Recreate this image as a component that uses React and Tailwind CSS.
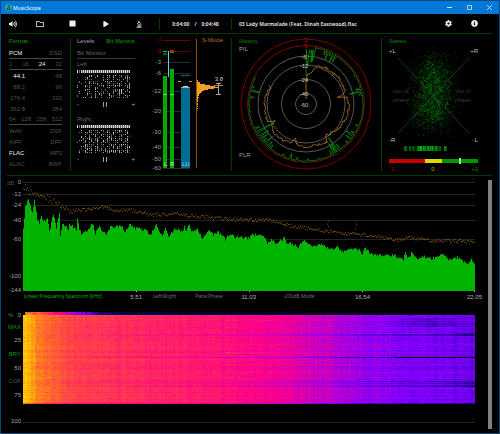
import React from 'react'
import { FaVolumeUp, FaRegFolder, FaStop, FaPlay, FaMicroscope, FaCog, FaInfoCircle } from 'react-icons/fa'

// small seeded generator so the charts are stable between renders
function makeRandom(seed) {
  let s = seed
  return () => {
    s = (s + 0x6d2b79f5) | 0
    let t = Math.imul(s ^ (s >>> 15), 1 | s)
    t = (t + Math.imul(t ^ (t >>> 7), 61 | t)) ^ t
    return ((t ^ (t >>> 14)) >>> 0) / 4294967296
  }
}

function interpolate(points, x) {
  if (x <= points[0][0]) return points[0][1]
  for (let i = 1; i < points.length; i++) {
    const [x1, y1] = points[i]
    const [x0, y0] = points[i - 1]
    if (x <= x1) return y0 + ((y1 - y0) * (x - x0)) / (x1 - x0)
  }
  return points[points.length - 1][1]
}

/* ---------- title bar and toolbar ---------- */

function TitleBar() {
  return (
    <header className="flex h-[13px] items-center bg-[#0078d7] pl-1 text-white">
      <svg className="h-[7px] w-[7px]" viewBox="0 0 14 14" aria-hidden="true">
        <circle cx="7" cy="7" r="7" fill="#2fa79a" />
        <path d="M6 2l3 1-1 4 2 4M7 6l-3 5M3 11h8" stroke="#0c3f3a" strokeWidth="1.6" fill="none" />
      </svg>
      <h1 className="ml-[1px] font-['Noto_Sans',sans-serif] text-[5px] leading-[8px]">MusicScope</h1>
      <div className="ml-auto flex">
        <button aria-label="Minimize" className="flex h-[13px] w-[20px] items-center justify-center">
          <svg className="h-[5px] w-[5px]" viewBox="0 0 5 5"><path d="M0 2.5h5" stroke="#cfe6fa" /></svg>
        </button>
        <button aria-label="Maximize" className="flex h-[13px] w-[20px] items-center justify-center">
          <svg className="h-[5px] w-[5px]" viewBox="0 0 5 5"><path d="M.5.5h4v4h-4z" stroke="#cfe6fa" strokeWidth=".8" fill="none" /></svg>
        </button>
        <button aria-label="Close" className="flex h-[13px] w-[20px] items-center justify-center">
          <svg className="h-[5px] w-[5px]" viewBox="0 0 5 5"><path d="M0 0l5 5M5 0l-5 5" stroke="#e6f2fc" strokeWidth=".8" /></svg>
        </button>
      </div>
    </header>
  )
}

function ToolButton({ label, className, children }) {
  return (
    <button aria-label={label} className={`flex h-[18px] items-center justify-center text-[#f0f0f0] ${className}`}>
      {children}
    </button>
  )
}

function MicroscopeIcon() {
  return (
    <svg className="h-[8px] w-[6px]" viewBox="0 0 12 16" fill="none" stroke="currentColor" strokeWidth="1.6">
      <path d="M6.5 1l-3 6M5 4l3 1.500M8 5.500c3 2 2.500 6-1 7.500M3 10h5M1 14.500h10M3 7l2 1" />
      <path d="M3 12.500h6" />
    </svg>
  )
}

function Toolbar() {
  return (
    <div className="ml-[6px] mr-[7px] flex h-[20px] items-center border-b border-[#003c00] text-[6px] font-bold text-[#dcdcdc]">
      <ToolButton label="Volume" className="mr-1 w-[12px]"><FaVolumeUp size={8} /></ToolButton>
      <ToolButton label="Open" className="w-[33px]"><FaRegFolder size={8} /></ToolButton>
      <ToolButton label="Stop" className="w-[33px]"><FaStop size={7} /></ToolButton>
      <ToolButton label="Play" className="w-[33px]"><FaPlay size={6} /></ToolButton>
      <ToolButton label="Analyze" className="w-[33px]"><MicroscopeIcon /></ToolButton>
      <div className="ml-1 h-[12px] w-px bg-[#003c00]" />
      <div className="flex w-[71px] items-center justify-center gap-[5px] whitespace-nowrap font-['Open_Sans',sans-serif] text-[5px]">
        <span>0:04:00</span>
        <span>/</span>
        <span>0:04:48</span>
      </div>
      <div className="h-[12px] w-px bg-[#003c00]" />
      <p className="ml-[7px] whitespace-nowrap font-['Open_Sans',sans-serif] text-[5px]">
        03 Lady Marmalade (Feat. Dinah Eastwood).flac
      </p>
      <div className="ml-auto mr-[5px] flex">
        <ToolButton label="Settings" className="w-[26px]"><FaCog size={7} /></ToolButton>
        <ToolButton label="Info" className="w-[26px]"><FaInfoCircle size={7} /></ToolButton>
      </div>
    </div>
  )
}

/* ---------- format panel ---------- */

const formatRows = [
  { items: ['PCM', 'DSD'], active: 'PCM', line: true },
  { items: ['1', '16', '24', '32'], active: '24', line: true },
  { items: ['44.1', '48'], active: '44.1', rates: true },
  { items: ['88.2', '96'], rates: true },
  { items: ['176.4', '192'], rates: true },
  { items: ['352.8', '384'], rates: true },
  { items: ['64', '128', '256', '512'], line: true },
  { items: ['WAV', 'DSF'] },
  { items: ['AIFF', 'DFF'] },
  { items: ['FLAC', 'MP3'], active: 'FLAC' },
  { items: ['ALAC', 'BWF'] },
]

function FormatPanel() {
  return (
    <section className="my-1 w-[64px] border-r border-[#003c00] pl-[2px] pr-2">
      <h2 className="h-[10px] leading-[6px] text-[#00a000]">Format</h2>
      {formatRows.map((row) => (
        <div
          key={row.items[0]}
          className={`flex h-[11px] items-center justify-between text-[#505050] ${row.line ? 'border-b border-[#484848]' : ''}`}
        >
          {row.items.map((item, i) => (
            <span
              key={item}
              className={`${item === row.active ? 'text-[#f0f0f0]' : ''} ${row.rates && i === 0 ? 'w-[16px] text-right' : ''}`}
            >
              {item}
            </span>
          ))}
        </div>
      ))}
    </section>
  )
}

/* ---------- levels panel ---------- */

function BitPattern({ seed }) {
  const random = makeRandom(seed)
  const marks = []
  for (let c = 0; c < 27; c++) {
    const density = c < 4 ? 0.35 : c % 3 === 2 ? 0.4 : 0.75
    for (let r = 0; r < 12; r++) {
      if (random() < density) {
        marks.push(<rect key={`${c}-${r}`} x={c * 2} y={5 + r * 2} width="1" height={random() < 0.6 ? 1 : 2} opacity={0.3 + random() * 0.6} />)
      }
    }
  }
  return (
    <svg className="block h-[28px] w-[54px]" viewBox="0 0 54 28" fill="#d8d8d8" shapeRendering="crispEdges">
      {Array.from({ length: 27 }, (_, c) => (
        <rect key={c} x={c * 2} y="0" width="1" height="3" opacity={c === 1 ? 0.5 : 1} />
      ))}
      <rect x="4" y="0" width="49" height="3" opacity="0.45" />
      {marks}
    </svg>
  )
}

function BitChannel({ name, seed }) {
  return (
    <div>
      <h3 className="h-[11px] leading-[11px] text-[#686868]">{name}</h3>
      <BitPattern seed={seed} />
      <div className="flex h-[12px] items-center justify-between text-[#b8b8b8]">
        <span>-</span>
        <span className="flex gap-[2px]">
          <i className="h-[5px] w-px bg-[#a0a0a0]" />
          <i className="h-[5px] w-px bg-[#a0a0a0]" />
        </span>
        <span>+</span>
      </div>
    </div>
  )
}

function LevelsPanel() {
  return (
    <section className="my-1 w-[69px] pl-[6px] pr-[5px]">
      <div className="flex h-[10px] items-start justify-between leading-[6px]">
        <button className="text-[#a8a8a8]">Levels</button>
        <button className="text-[#00a000]">Bit Monitor</button>
      </div>
      <h2 className="h-[11px] border-b border-[#383838] leading-[10px] text-[#686868]">Bit Monitor</h2>
      <div className="flex flex-col gap-1">
        <BitChannel name="Left" seed={3} />
        <BitChannel name="Right" seed={11} />
      </div>
    </section>
  )
}

/* ---------- level meter ---------- */

const meterScale = [
  ['3', 6, '#900000'], ['0', 17, '#c00000'], ['-3', 28, '#a0a0a0'], ['-6', 39, '#a0a0a0'], ['-12', 57, '#a0a0a0'],
  ['-20', 77, '#a0a0a0'], ['-30', 98, '#a0a0a0'], ['-40', 113, '#a0a0a0'], ['-50', 125, '#a0a0a0'], ['-60', 134, '#a0a0a0'],
]

const histogram = [1, 1, 3, 3, 8, 13, 18, 21, 17, 11, 7, 5, 4, 3, 2, 2, 1, 2, 1, 1, 1, 1, 0, 1, 1, 0, 1, 0, 1]

function MeterPanel() {
  return (
    <section className="my-1 w-[92px] border-r border-[#003c00]">
      <svg className="-my-1 block h-[141px] w-[91px]" viewBox="0 0 91 141" fontSize="6" shapeRendering="crispEdges">
        {meterScale.map(([label, y, color], i) => (
          <g key={label}>
            <text x="21" y={y + 2} textAnchor="end" fill={color}>{label}</text>
            <path d={`M23 ${y}.5h27`} stroke={i < 2 ? '#680000' : '#2c2c2c'} />
          </g>
        ))}
        <rect x="23" y="42" width="4" height="92" fill="#00aa00" />
        <rect x="30" y="35" width="4" height="99" fill="#00aa00" />
        <rect x="23" y="17" width="4" height="1" fill="#00c850" />
        <rect x="23" y="19" width="4" height="2" fill="#006400" />
        <rect x="30" y="16" width="4" height="2" fill="#c81414" />
        <rect x="30" y="18" width="4" height="1" fill="#00a000" />
        <rect x="23" y="60" width="4" height="1" fill="#30ff30" />
        <rect x="30" y="60" width="4" height="1" fill="#30ff30" />
        <rect x="28" y="17" width="1" height="26" fill="#58d0ff" />
        <rect x="41" y="53" width="9" height="81" fill="#006c96" />
        <rect x="41" y="41" width="9" height="1" fill="#006c96" />
        <rect x="41" y="53" width="9" height="1" fill="#b0a890" />
        <rect x="43" y="52" width="5" height="1" fill="#d8d8d8" />
        <path d="M38 47.5h3M49 47.5h3" stroke="#d89020" />
        <text x="24" y="132" fill="#c8f0c8">L</text>
        <text x="30" y="132" fill="#c8f0c8">R</text>
        <text x="42" y="132" fill="#a8d8e8">LU</text>
        <path d="M56.5 5v129" stroke="#8a5600" />
        <text x="83" y="8" textAnchor="end" fill="#b87414">S-Mode</text>
        {histogram.map((w, i) => (
          <rect key={i} x="57" y={46 + i} width={w} height="1" fill="#f0a020" />
        ))}
        <path d="M74 51.5h9" stroke="#c08020" />
        <path d="M78.5 49v12M76 49.5h5M76 60.5h5" stroke="#a8a8a8" />
        <text x="83" y="47" textAnchor="end" fill="#c8c8c8">3.8</text>
      </svg>
    </section>
  )
}

/* ---------- history ---------- */

const orangeTrace = [
  [0, 27], [3, 29], [8, 31], [11, 33], [17, 40], [30, 41], [45, 41], [60, 42], [70, 41], [76, 38], [78, 33], [80, 41],
  [90, 43], [110, 42], [130, 40], [149, 37], [151, 43], [170, 42], [180, 43], [194, 41], [197, 35], [201, 42], [215, 43],
  [228, 43], [239, 40], [241, 35], [246, 42], [262, 41], [280, 41], [290, 40], [295, 39], [298, 42],
]

// [angle, depth] of the dips below the ring
const greenDips = [
  [20, 5], [23, 9], [26, 4], [29, 9], [32, 8], [60, 2], [74, 6], [77, 13], [80, 4], [113, 4], [121, 5], [124, 10],
  [128, 7], [133, 3], [143, 7], [146, 17], [148, 9], [150, 12], [153, 5], [166, 2], [178, 3], [189, 4], [196, 6], [204, 3],
  [219, 5], [222, 7], [226, 11], [229, 5], [232, 9], [235, 12], [240, 20], [244, 6], [262, 2], [277, 5], [284, 10], [288, 3],
]

function polar(angle, r) {
  const a = (angle * Math.PI) / 180
  return `${(Math.sin(a) * r).toFixed(1)} ${(-Math.cos(a) * r).toFixed(1)}`
}

function HistoryPanel() {
  const random = makeRandom(7)
  const orange = ['0 -5']
  for (let a = 0; a <= 298; a += 1.5) orange.push(polar(a, interpolate(orangeTrace, a) + (random() - 0.5) * 2.6))
  const green = ['0 -28']
  for (let a = 0.5; a < 9; a += 0.7) green.push(polar(a, 38 + random() * 17))
  for (let a = 10; a <= 298; a++) {
    const dip = greenDips.find((d) => d[0] === a)
    green.push(polar(a, 57.5 - (dip ? dip[1] : random() * 0.8)))
  }
  return (
    <section className="my-1 flex-1 border-r border-[#003c00]">
      <svg className="-my-1 mx-auto block h-[141px] w-[148px]" viewBox="-73 -70 148 141" fontSize="6" fill="none">
        <circle r="65" stroke="#7c0000" />
        <circle r="58.5" stroke="#7c0000" />
        <circle r="48" stroke="#585858" />
        <circle r="39" stroke="#585858" />
        <circle r="24.5" stroke="#585858" />
        <circle r="10.5" stroke="#585858" />
        <polyline points={green.join(' ')} stroke="#00a010" strokeWidth=".7" />
        <polyline points={orange.join(' ')} stroke="#c07c1c" strokeWidth=".8" />
        <g textAnchor="middle" fill="#c0c0c0">
          <text y="-62" fill="#c00000">3</text>
          <text y="-56" fill="#c00000">0</text>
          <text x="-2" y="-45">-6</text>
          <text x="-2" y="-36">-12</text>
          <text x="-2" y="-22">-24</text>
          <text x="-2" y="-8">-40</text>
          <text x="-2" y="3">-60</text>
        </g>
        <text x="-67" y="-61" fill="#008c00">History</text>
        <text x="-67" y="-53" fill="#a8a8a8">P/L</text>
        <text x="-67" y="53" fill="#989898">PLR</text>
      </svg>
    </section>
  )
}

/* ---------- stereo ---------- */

function StereoPanel() {
  const random = makeRandom(21)
  const gauss = () => random() + random() + random() + random() - 2
  const dots = []
  for (let i = 0; i < 2500; i++) {
    const upper = random() < 0.52
    const cx = (upper ? 52 : 50) + gauss() * 17
    const cy = (upper ? 45 : 74) + gauss() * 20
    dots.push(`M${cx.toFixed(1)} ${cy.toFixed(1)}h.6`)
  }
  const stripes = Array.from({ length: 43 }, (_, i) => (i > 36 && i < 40 ? 0 : i < 14 ? random() * 0.7 : 0.35 + random() * 0.65))
  return (
    <section className="w-[110px]">
      <svg className="block h-[141px] w-[110px]" viewBox="0 0 110 141" fontSize="6">
        <text x="7" y="9" fill="#008c00">Stereo</text>
        <path d="M16 24l71 75M87 24l-71 75" stroke="#3c3c3c" strokeWidth=".7" />
        <path d={dots.slice(0, 1600).join('')} stroke="#007808" strokeWidth=".6" opacity=".8" />
        <path d={dots.slice(1600).join('')} stroke="#10b018" strokeWidth=".6" opacity=".8" />
        <g fill="#b8b8b8">
          <text x="7" y="19">+L</text>
          <text x="96" y="19" textAnchor="end">+R</text>
          <text x="7" y="108">-R</text>
          <text x="96" y="108" textAnchor="end">-L</text>
        </g>
        <g fill="#383838" textAnchor="middle">
          <text x="19" y="59">out of</text>
          <text x="19" y="68">phase</text>
          <text x="81" y="59">out of</text>
          <text x="81" y="68">phase</text>
        </g>
        {stripes.map((o, i) => (
          <rect key={i} x={22 + i} y="112" width="1" height="5" fill="#00b010" opacity={o} />
        ))}
        <rect x="7" y="125" width="36" height="4" fill="#c80000" />
        <rect x="43" y="125" width="17" height="4" fill="#dcd800" />
        <rect x="60" y="125" width="36" height="4" fill="#009600" />
        <rect x="77" y="124" width="2" height="6" fill="#a8e0a8" />
        <text x="7" y="137" fill="#b00000">-1</text>
        <text x="51" y="137" fill="#b8b400" textAnchor="middle">0</text>
        <text x="96" y="137" fill="#008c00" textAnchor="end">+1</text>
      </svg>
    </section>
  )
}

/* ---------- spectrum ---------- */

const spectrumShape = [
  [0, 50], [2, 29], [5, 21], [7, 27], [9, 35], [11, 21], [14, 42], [16, 45], [18, 37], [20, 44], [24, 41], [26, 53],
  [30, 36], [33, 49], [36, 36], [37, 57], [39, 45], [43, 49], [45, 52], [46, 46], [50, 49], [53, 52], [54, 41], [56, 51],
  [59, 57], [61, 53], [64, 54], [69, 45], [72, 55], [76, 47], [79, 53], [83, 57], [87, 49], [92, 49], [97, 47], [102, 54],
  [107, 46], [112, 51], [115, 49], [119, 53], [122, 51], [127, 57], [133, 47], [135, 52], [139, 57], [142, 51], [145, 59],
  [152, 50], [159, 54], [161, 49], [163, 53], [166, 46], [168, 53], [174, 52], [179, 61], [186, 52], [190, 57], [195, 54],
  [202, 61], [207, 56], [212, 59], [226, 60], [227, 57], [239, 57], [244, 65], [248, 61], [252, 66], [261, 60], [263, 64],
  [269, 66], [275, 69], [280, 62], [289, 69], [298, 66], [304, 70], [312, 71], [314, 69], [319, 74], [327, 71], [336, 71],
  [339, 77], [341, 70], [344, 73], [351, 77], [357, 77], [369, 77], [380, 81], [382, 75], [385, 80], [389, 74], [394, 82],
  [400, 78], [407, 81], [420, 77], [425, 81], [434, 79], [440, 84], [445, 86], [448, 81], [452, 87],
]

const peakShape = [
  [0, 9], [3, 11], [10, 15], [20, 19], [27, 22], [37, 27], [50, 32], [64, 32], [80, 29], [90, 33], [107, 32], [127, 37],
  [154, 36], [177, 39], [204, 41], [227, 42], [247, 42], [264, 47], [294, 52], [320, 56], [344, 57], [374, 62], [387, 60],
  [407, 63], [440, 63], [452, 65],
]

const dbScale = [['0', 4], ['-12', 16], ['-24', 27], ['-40', 42], ['-60', 61], ['-100', 98], ['-144', 112]]

function SpectrumScale() {
  return (
    <svg className="block h-[114px] w-[22px]" viewBox="0 0 22 114" fontSize="6" fill="#a0a0a0">
      <text x="6" y="7" fill="#505050">dB</text>
      {dbScale.map(([label, y]) => (
        <text key={label} x="20" y={y + 2} textAnchor="end">{label}</text>
      ))}
    </svg>
  )
}

function SpectrumPlot() {
  const random = makeRandom(5)
  let area = 'M0 113'
  for (let x = 0; x < 452; x++) {
    const y = interpolate(spectrumShape, x) + (random() - 0.5) * 3
    area += `V${y.toFixed(1)}H${x + 1}`
  }
  area += 'V113z'
  let peaks = ''
  for (let x = 0; x < 452; x++) {
    const spread = x < 50 ? 8 : 3.5
    const y = interpolate(peakShape, x) + (random() - 0.5) * spread
    peaks += `M${x} ${y.toFixed(1)}h1`
  }
  peaks += 'M305 43h1M304 46h1M305 49h1M333 44h1M333 47h1M332 50h1'
  return (
    <svg className="block h-[114px] w-full" viewBox="0 0 452 114" preserveAspectRatio="none">
      {dbScale.slice(0, 5).map(([label, y]) => (
        <path key={label} d={`M0 ${y}.5h452`} stroke="#242424" />
      ))}
      <path d={area} fill="#00b400" />
      <path d={peaks} stroke="#9a6800" strokeWidth=".8" />
      <path d="M113.5 113v1M226.5 113v1M339.5 113v1M451.5 113v1" stroke="#b0b0b0" />
    </svg>
  )
}

function AxisMode({ active, children }) {
  return (
    <button className={`font-['Noto_Sans',sans-serif] text-[5px] leading-[9px] ${active ? 'text-[#00b400]' : 'text-[#707070]'}`}>
      {children}
    </button>
  )
}

function FrequencyAxis() {
  return (
    <div className="grid h-[12px] grid-cols-4 whitespace-nowrap leading-[10px] text-[#b0b0b0]">
      <div className="flex items-start justify-between pl-[1px]">
        <AxisMode active>Linear Frequency Spectrum [kHz]</AxisMode>
        <span className="-mr-[6px]">5.51</span>
      </div>
      <div className="flex items-start justify-between pl-[17px]">
        <AxisMode>Left/Right</AxisMode>
        <AxisMode>Pans/Phase</AxisMode>
        <span className="-mr-[7px]">11.03</span>
      </div>
      <div className="flex items-start pl-[34px]">
        <AxisMode>-200dB Mode</AxisMode>
      </div>
      <div className="flex items-start justify-between">
        <span className="-ml-[7px]">16.54</span>
        <span className="-mr-[7px]">22.05</span>
      </div>
    </div>
  )
}

/* ---------- spectrogram ---------- */

const palette = [
  [0, [0, 0, 0]], [0.12, [0, 0, 80]], [0.25, [70, 0, 190]], [0.36, [125, 0, 255]], [0.48, [190, 0, 205]], [0.6, [250, 0, 140]],
  [0.7, [255, 30, 105]], [0.8, [255, 80, 60]], [0.9, [255, 145, 20]], [1, [255, 215, 0]],
]

const channels = [0, 1, 2].map((c) => palette.map(([stop, rgb]) => [stop, rgb[c]]))

const energy = [
  [0, 0.97], [8, 0.93], [15, 0.87], [36, 0.81], [45, 0.77], [80, 0.745], [130, 0.71], [180, 0.68], [227, 0.62], [260, 0.57],
  [300, 0.49], [340, 0.41], [380, 0.36], [420, 0.34], [452, 0.32],
]

const quietRows = { 6: 0.05, 12: 0.04, 19: 0.09, 20: 0.07, 37: 0.06, 42: 0.18, 66: 0.07, 68: 0.05, 70: 0.07, 71: 0.1 }
const loudRows = { 5: 0.05, 12: 0.06, 21: 0.03, 29: 0.05, 37: 0.11, 49: 0.05, 57: 0.05, 73: 0.03 }

function buildSpectrogram() {
  const random = makeRandom(99)
  const levels = 56
  const paths = Array.from({ length: levels }, () => '')
  const columnNoise = Array.from({ length: 226 }, () => (random() - 0.5) * 0.035)
  const add = (value, x, y) => {
    const level = Math.max(0, Math.min(levels - 1, Math.round(value * (levels - 1))))
    paths[level] += `M${x} ${y}h2v1h-2z`
  }
  // fade-in at the start of the track
  for (let y = 2; y < 5; y++) {
    for (let c = 1; c < 226; c++) {
      const base = c < 12 ? 0.88 - c * 0.01 : c < 38 ? 0.72 - (c - 12) * 0.022 : 0.13 - (c - 38) * 0.0007
      add(base + (random() - 0.5) * (c < 38 ? 0.14 : 0.04), c * 2, y)
    }
  }
  for (let r = 0; r < 89; r++) {
    const rowNoise = (random() - 0.5) * 0.04
    for (let c = 0; c < 226; c++) {
      const x = c * 2
      let v = interpolate(energy, x) + rowNoise + columnNoise[c] + (random() - 0.5) * 0.05
      if (quietRows[r]) v -= quietRows[r] * Math.min(1, x / 260)
      if (loudRows[r] && x > 200) v += loudRows[r]
      // quiet passages in the top octave
      if (r > 2 && r < 12 && x > 360) v -= 0.08 * Math.max(0, 1 - Math.abs(x - 405) / 50)
      if (Math.abs(r - 19) < 2 || Math.abs(r - 69) < 3) v -= 0.06 * Math.max(0, (x - 412) / 40)
      if (r === 42 && x > 370) v = 0.02
      if (r === 88) v -= 0.12
      add(v, x, r + 5)
    }
  }
  return paths.map((d, i) => {
    const [red, green, blue] = channels.map((stops) => Math.round(interpolate(stops, i / (levels - 1))))
    return { d, fill: `rgb(${red} ${green} ${blue})` }
  })
}

const spectrogram = buildSpectrogram()

const timeScale = [
  ['0', 5, '#a0a0a0'], ['MAX', 17, '#009c00'], ['25', 30, '#a0a0a0'], ['BRY', 44, '#009c00'], ['50', 58, '#a0a0a0'],
  ['COF', 71, '#505050'], ['75', 85, '#a0a0a0'], ['100', 111, '#a0a0a0'],
]

function SpectrogramScale() {
  return (
    <svg className="block h-[116px] w-[22px]" viewBox="0 0 22 116" fontSize="6">
      <text x="7" y="7" fill="#686868">%</text>
      {timeScale.map(([label, y, color]) => (
        <text key={label} x="20" y={y + 2} textAnchor="end" fill={color}>{label}</text>
      ))}
    </svg>
  )
}

function SpectrogramPlot() {
  return (
    <svg className="block h-[116px] w-full" viewBox="0 0 452 116" preserveAspectRatio="none" shapeRendering="crispEdges">
      {spectrogram.map(({ d, fill }) => (
        <path key={fill} d={d} fill={fill} />
      ))}
      <path d="M0 112.5h452" stroke="#242424" />
    </svg>
  )
}

export default function App() {
  return (
    <div className="flex min-h-screen flex-col overflow-hidden border border-[#0a4a7c] bg-black font-['Liberation_Sans',Arial,sans-serif] text-[6px] leading-[8px]">
      <TitleBar />
      <Toolbar />
      <div className="ml-[6px] mr-[7px] flex border-b border-[#003c00]">
        <FormatPanel />
        <LevelsPanel />
        <MeterPanel />
        <HistoryPanel />
        <StereoPanel />
      </div>
      <main className="flex flex-1">
        <div className="grid min-w-0 flex-1 grid-cols-[22px_1fr] content-start pt-[2px]">
          <SpectrumScale />
          <SpectrumPlot />
          <div className="col-start-2 mb-[6px]"><FrequencyAxis /></div>
          <SpectrogramScale />
          <SpectrogramPlot />
        </div>
        <div className="mb-1 ml-[13px] mr-[7px] mt-1 w-1 bg-[#808080]" />
      </main>
    </div>
  )
}
